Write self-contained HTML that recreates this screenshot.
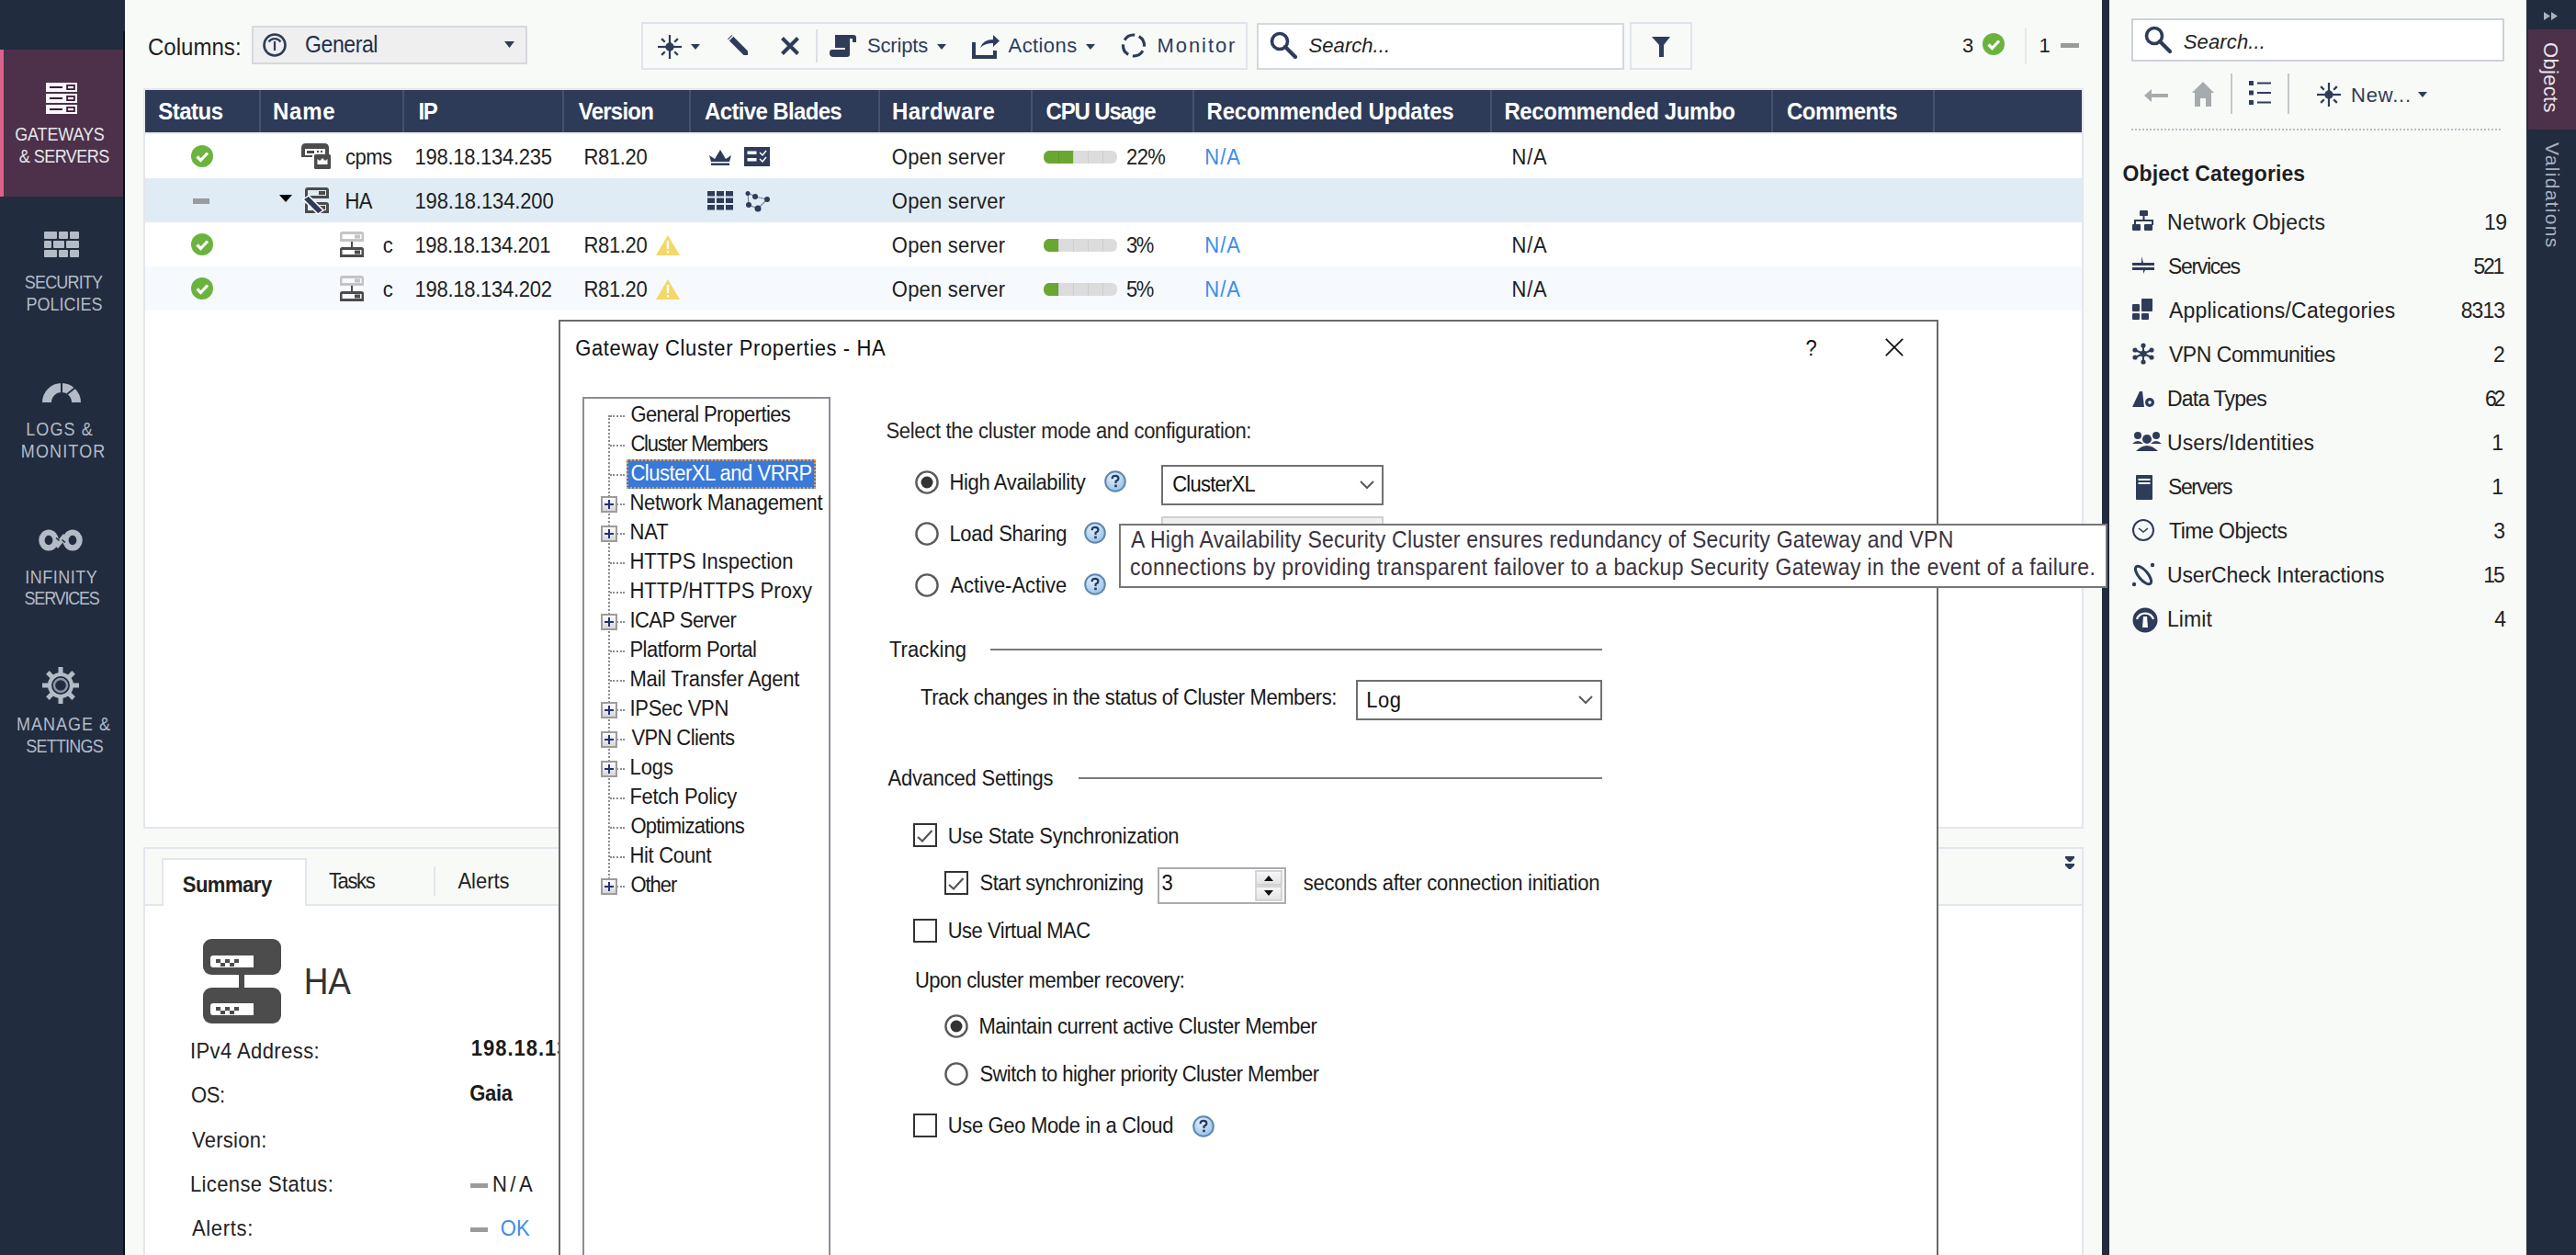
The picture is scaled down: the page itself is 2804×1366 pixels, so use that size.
<!DOCTYPE html><html><head><meta charset="utf-8"><title>Gateway Cluster Properties</title><style>

html,body{margin:0;padding:0}
body{width:2804px;height:1366px;position:relative;overflow:hidden;background:#f8faf8;font-family:"Liberation Sans",sans-serif}
.a{position:absolute}
.t{white-space:pre}
svg{overflow:visible}

</style></head><body>
<div class="a" style="left:0px;top:0px;width:136px;height:1366px;background:#222c3f"></div>
<div class="a" style="left:0px;top:54px;width:134px;height:160px;background:#4d3049"></div>
<div class="a" style="left:0px;top:54px;width:4px;height:160px;background:#d9628a"></div>
<div class="a" style="left:134px;top:34px;width:2px;height:1332px;background:#07101d"></div>
<div class="a t" style="left:16.20px;top:138.20px;font-size:18px;line-height:18px;color:#e6e7ee;letter-spacing:-0.143px;transform:scaleY(1.100);transform-origin:0 15.30px;">GATEWAYS</div>
<div class="a t" style="left:20.85px;top:161.70px;font-size:18px;line-height:18px;color:#e6e7ee;letter-spacing:-0.537px;transform:scaleY(1.100);transform-origin:0 15.30px;">&amp; SERVERS</div>
<div class="a t" style="left:26.75px;top:298.70px;font-size:18px;line-height:18px;color:#b3bbc7;letter-spacing:-0.814px;transform:scaleY(1.100);transform-origin:0 15.30px;">SECURITY</div>
<div class="a t" style="left:28.60px;top:322.70px;font-size:18px;line-height:18px;color:#b3bbc7;letter-spacing:-0.029px;transform:scaleY(1.100);transform-origin:0 15.30px;">POLICIES</div>
<div class="a t" style="left:28.25px;top:459.30px;font-size:18px;line-height:18px;color:#b3bbc7;letter-spacing:1.100px;transform:scaleY(1.100);transform-origin:0 15.30px;">LOGS &amp;</div>
<div class="a t" style="left:22.80px;top:482.70px;font-size:18px;line-height:18px;color:#b3bbc7;letter-spacing:1.133px;transform:scaleY(1.100);transform-origin:0 15.30px;">MONITOR</div>
<div class="a t" style="left:27.35px;top:619.70px;font-size:18px;line-height:18px;color:#b3bbc7;letter-spacing:0.471px;transform:scaleY(1.100);transform-origin:0 15.30px;">INFINITY</div>
<div class="a t" style="left:26.55px;top:643.30px;font-size:18px;line-height:18px;color:#b3bbc7;letter-spacing:-1.214px;transform:scaleY(1.100);transform-origin:0 15.30px;">SERVICES</div>
<div class="a t" style="left:18.00px;top:779.70px;font-size:18px;line-height:18px;color:#b3bbc7;letter-spacing:1.000px;transform:scaleY(1.100);transform-origin:0 15.30px;">MANAGE &amp;</div>
<div class="a t" style="left:28.25px;top:803.70px;font-size:18px;line-height:18px;color:#b3bbc7;letter-spacing:-0.786px;transform:scaleY(1.100);transform-origin:0 15.30px;">SETTINGS</div>
<svg class="a" style="left:50px;top:90px" width="34" height="34" viewBox="0 0 34 34"><rect x="0" y="0" width="34" height="10" fill="#f6f8fd"/><rect x="4" y="4" width="14" height="2" fill="#3c1b35"/><rect x="23.1" y="2.9" width="7.8" height="4.2" fill="none" stroke="#3c1b35" stroke-width="1.8"/><rect x="0" y="12" width="34" height="10" fill="#f6f8fd"/><rect x="4" y="16" width="14" height="2" fill="#3c1b35"/><rect x="23.1" y="14.9" width="7.8" height="4.2" fill="none" stroke="#3c1b35" stroke-width="1.8"/><rect x="0" y="24" width="34" height="10" fill="#f6f8fd"/><rect x="4" y="28" width="14" height="2" fill="#3c1b35"/><rect x="23.1" y="26.9" width="7.8" height="4.2" fill="none" stroke="#3c1b35" stroke-width="1.8"/></svg>
<svg class="a" style="left:48px;top:252px" width="38" height="28" viewBox="0 0 38 28"><rect x="0" y="0" width="14" height="8" rx="1" fill="#b3bbc7"/><rect x="16" y="0" width="10" height="8" rx="1" fill="#b3bbc7"/><rect x="28" y="0" width="10" height="8" rx="1" fill="#b3bbc7"/><rect x="0" y="10" width="8" height="8" rx="1" fill="#b3bbc7"/><rect x="10" y="10" width="12" height="8" rx="1" fill="#b3bbc7"/><rect x="24" y="10" width="14" height="8" rx="1" fill="#b3bbc7"/><rect x="0" y="20" width="14" height="8" rx="1" fill="#b3bbc7"/><rect x="16" y="20" width="10" height="8" rx="1" fill="#b3bbc7"/><rect x="28" y="20" width="10" height="8" rx="1" fill="#b3bbc7"/></svg>
<svg class="a" style="left:46px;top:416px" width="42" height="22" viewBox="0 0 42 22"><path d="M5 22 A16 16 0 0 1 37 22" fill="none" stroke="#b3bbc7" stroke-width="10"/><line x1="21" y1="0" x2="21" y2="11" stroke="#222c3f" stroke-width="2"/><line x1="27" y1="13" x2="39" y2="3.5" stroke="#222c3f" stroke-width="1.8"/></svg>
<svg class="a" style="left:42px;top:576px" width="48" height="24" viewBox="0 0 48 24"><ellipse cx="11" cy="12" rx="7.6" ry="8.4" fill="none" stroke="#b3bbc7" stroke-width="6.4"/><ellipse cx="37" cy="12" rx="7.6" ry="8.4" fill="none" stroke="#b3bbc7" stroke-width="6.4"/><path d="M17 17 L27 5 L31 9 L21 21 Z" fill="#b3bbc7"/><path d="M19 9.5 L22.5 12.5 M25.5 11.5 L29 14.5" stroke="#222c3f" stroke-width="1.6"/></svg>
<svg class="a" style="left:46px;top:726px" width="40" height="40" viewBox="0 0 40 40"><rect x="17.5" y="0" width="5" height="8" fill="#b3bbc7" transform="rotate(0 20 20)"/><rect x="17.5" y="0" width="5" height="8" fill="#b3bbc7" transform="rotate(45 20 20)"/><rect x="17.5" y="0" width="5" height="8" fill="#b3bbc7" transform="rotate(90 20 20)"/><rect x="17.5" y="0" width="5" height="8" fill="#b3bbc7" transform="rotate(135 20 20)"/><rect x="17.5" y="0" width="5" height="8" fill="#b3bbc7" transform="rotate(180 20 20)"/><rect x="17.5" y="0" width="5" height="8" fill="#b3bbc7" transform="rotate(225 20 20)"/><rect x="17.5" y="0" width="5" height="8" fill="#b3bbc7" transform="rotate(270 20 20)"/><rect x="17.5" y="0" width="5" height="8" fill="#b3bbc7" transform="rotate(315 20 20)"/><circle cx="20" cy="20" r="12" fill="none" stroke="#b3bbc7" stroke-width="4"/><circle cx="20" cy="20" r="7" fill="none" stroke="#8d96a5" stroke-width="2.4"/></svg>
<div class="a t" style="left:160.90px;top:39.50px;font-size:24px;line-height:24px;color:#1e1e1e;letter-spacing:0.043px;transform:scaleY(1.080);transform-origin:0 20.40px;">Columns:</div>
<div class="a" style="left:274px;top:28px;width:300px;height:42px;background:#efefef;border:2px solid #d6d9df;box-sizing:border-box"></div>
<svg class="a" style="left:286px;top:36px" width="26" height="26" viewBox="0 0 26 26"><circle cx="13" cy="13" r="11.5" fill="none" stroke="#2e3c5a" stroke-width="2.6"/><path d="M6.5 9.5 A8 8 0 0 1 19.5 9.5" fill="none" stroke="#2e3c5a" stroke-width="2.2"/><line x1="13" y1="9" x2="13" y2="19" stroke="#2e3c5a" stroke-width="2.2"/></svg>
<div class="a t" style="left:332.00px;top:38.25px;font-size:23px;line-height:23px;color:#1f2e4d;letter-spacing:-0.400px;transform:scaleY(1.120);transform-origin:0 19.55px;">General</div>
<svg class="a" style="left:549px;top:45px" width="11" height="7" viewBox="0 0 11 7"><path d="M0 0 H11 L5.5 7 Z" fill="#2e3c5a"/></svg>
<div class="a" style="left:698px;top:24px;width:660px;height:52px;border:2px solid #e1e3ec;box-sizing:border-box"></div>
<svg class="a" style="left:716px;top:38px" width="26" height="26" viewBox="0 0 26 26"><line x1="0" y1="13" x2="26" y2="13" stroke="#2e3c5a" stroke-width="2.2"/><line x1="13" y1="0" x2="13" y2="26" stroke="#2e3c5a" stroke-width="2.2"/><line x1="18.20" y1="18.20" x2="21.84" y2="21.84" stroke="#2e3c5a" stroke-width="2.3100000000000005"/><line x1="18.20" y1="7.80" x2="21.84" y2="4.16" stroke="#2e3c5a" stroke-width="2.3100000000000005"/><line x1="7.80" y1="18.20" x2="4.16" y2="21.84" stroke="#2e3c5a" stroke-width="2.3100000000000005"/><line x1="7.80" y1="7.80" x2="4.16" y2="4.16" stroke="#2e3c5a" stroke-width="2.3100000000000005"/><circle cx="13" cy="13" r="4.68" fill="#2e3c5a"/></svg>
<svg class="a" style="left:752px;top:48px" width="10" height="6" viewBox="0 0 10 6"><path d="M0 0 H10 L5 6 Z" fill="#2e3c5a"/></svg>
<svg class="a" style="left:792px;top:38px" width="22" height="22" viewBox="0 0 22 22"><path d="M4.5 0 L22 17.5 L22 22 L17.5 22 L0 4.5 Z" fill="#2e3c5a"/><path d="M0.5 6.5 L6.5 0.5" stroke="#f8faf8" stroke-width="1.6"/></svg>
<svg class="a" style="left:850px;top:40px" width="20" height="20" viewBox="0 0 20 20"><path d="M1.5 1.5 L18.5 18.5 M18.5 1.5 L1.5 18.5" stroke="#2e3c5a" stroke-width="4"/></svg>
<div class="a" style="left:888px;top:32px;width:2px;height:36px;background:#dde0e6"></div>
<svg class="a" style="left:903px;top:38px" width="29" height="24" viewBox="0 0 29 24"><path d="M6 0 H26 Q29 0 29 3 V8 H25 V4 H22 V14 H6 Z" fill="#2e3c5a"/><path d="M3 16 H22 V21 Q22 24 19 24 H4 Q0 24 0 20 V19 Q0 16 3 16 Z" fill="#2e3c5a"/><rect x="17" y="13" width="5" height="4" fill="#2e3c5a"/></svg>
<div class="a t" style="left:944.00px;top:38.90px;font-size:22px;line-height:22px;color:#2e3c5a;letter-spacing:-0.167px;">Scripts</div>
<svg class="a" style="left:1020px;top:48px" width="10" height="6" viewBox="0 0 10 6"><path d="M0 0 H10 L5 6 Z" fill="#2e3c5a"/></svg>
<svg class="a" style="left:1058px;top:36px" width="30" height="28" viewBox="0 0 30 28"><path d="M2 10 V26 H25 V19" fill="none" stroke="#2e3c5a" stroke-width="4"/><path d="M9 16 Q12 7 23 7 V2 L30 8.5 L23 15 V11 Q14 11 9 16 Z" fill="#2e3c5a"/></svg>
<div class="a t" style="left:1097.60px;top:38.90px;font-size:22px;line-height:22px;color:#2e3c5a;letter-spacing:0.400px;">Actions</div>
<svg class="a" style="left:1182px;top:48px" width="10" height="6" viewBox="0 0 10 6"><path d="M0 0 H10 L5 6 Z" fill="#2e3c5a"/></svg>
<svg class="a" style="left:1220px;top:36px" width="28" height="27" viewBox="0 0 28 27"><circle cx="14" cy="13.5" r="11.5" fill="none" stroke="#2e3c5a" stroke-width="3.2" stroke-dasharray="13 5" transform="rotate(-60 14 13.5)"/></svg>
<div class="a t" style="left:1259.60px;top:38.90px;font-size:22px;line-height:22px;color:#2e3c5a;letter-spacing:1.900px;">Monitor</div>
<div class="a" style="left:1368px;top:25px;width:400px;height:51px;background:#fff;border:2px solid #d5d8de;box-sizing:border-box"></div>
<svg class="a" style="left:1382px;top:34px" width="30" height="31" viewBox="0 0 30 31"><circle cx="11" cy="11" r="8.5" fill="none" stroke="#2e3c5a" stroke-width="3.6"/><line x1="17" y1="17" x2="28" y2="28" stroke="#2e3c5a" stroke-width="4.2" stroke-linecap="round"/></svg>
<div class="a t" style="left:1424.60px;top:38.90px;font-size:22px;line-height:22px;color:#222;font-style:italic;letter-spacing:0.050px;">Search...</div>
<div class="a" style="left:1774px;top:24px;width:68px;height:52px;border:2px solid #e1e3ec;box-sizing:border-box"></div>
<svg class="a" style="left:1798px;top:40px" width="20" height="22" viewBox="0 0 20 22"><path d="M0 0 H20 L13 9 V22 H8 V9 Z" fill="#2e3c5a"/></svg>
<div class="a t" style="left:2136.00px;top:39.30px;font-size:22px;line-height:22px;color:#222;">3</div>
<svg class="a" style="left:2158px;top:36px" width="24" height="24" viewBox="0 0 24 24"><circle cx="12" cy="12" r="12" fill="#6ab43e"/><path d="M6.5 12.5 L10.5 16.5 L18 8.5" fill="none" stroke="#fff" stroke-width="3.2"/></svg>
<div class="a" style="left:2204px;top:30px;width:2px;height:40px;background:#e6e8ea"></div>
<div class="a t" style="left:2219.50px;top:39.30px;font-size:22px;line-height:22px;color:#222;">1</div>
<div class="a" style="left:2243px;top:47px;width:20px;height:5px;background:#9a9a9a"></div>
<div class="a" style="left:2288px;top:0px;width:8px;height:1366px;background:#222c3f"></div>
<div class="a" style="left:156px;top:96px;width:2112px;height:806px;background:#fff;border:2px solid #e3e6ec;box-sizing:border-box"></div>
<div class="a" style="left:158px;top:98px;width:2108px;height:46px;background:#2d3a58"></div>
<div class="a" style="left:282px;top:98px;width:2px;height:46px;background:#46526c"></div>
<div class="a" style="left:438px;top:98px;width:2px;height:46px;background:#46526c"></div>
<div class="a" style="left:612px;top:98px;width:2px;height:46px;background:#46526c"></div>
<div class="a" style="left:750px;top:98px;width:2px;height:46px;background:#46526c"></div>
<div class="a" style="left:956px;top:98px;width:2px;height:46px;background:#46526c"></div>
<div class="a" style="left:1122px;top:98px;width:2px;height:46px;background:#46526c"></div>
<div class="a" style="left:1298px;top:98px;width:2px;height:46px;background:#46526c"></div>
<div class="a" style="left:1622px;top:98px;width:2px;height:46px;background:#46526c"></div>
<div class="a" style="left:1928px;top:98px;width:2px;height:46px;background:#46526c"></div>
<div class="a" style="left:2104px;top:98px;width:2px;height:46px;background:#46526c"></div>
<div class="a t" style="left:172.30px;top:109.60px;font-size:24px;line-height:24px;color:#ffffff;font-weight:700;letter-spacing:-0.520px;transform:scaleY(1.080);transform-origin:0 20.40px;">Status</div>
<div class="a t" style="left:297.00px;top:109.60px;font-size:24px;line-height:24px;color:#ffffff;font-weight:700;letter-spacing:0.767px;transform:scaleY(1.080);transform-origin:0 20.40px;">Name</div>
<div class="a t" style="left:455.50px;top:109.60px;font-size:24px;line-height:24px;color:#ffffff;font-weight:700;letter-spacing:-1.500px;transform:scaleY(1.080);transform-origin:0 20.40px;">IP</div>
<div class="a t" style="left:629.80px;top:109.60px;font-size:24px;line-height:24px;color:#ffffff;font-weight:700;letter-spacing:-0.767px;transform:scaleY(1.080);transform-origin:0 20.40px;">Version</div>
<div class="a t" style="left:767.00px;top:109.60px;font-size:24px;line-height:24px;color:#ffffff;font-weight:700;letter-spacing:-0.642px;transform:scaleY(1.080);transform-origin:0 20.40px;">Active Blades</div>
<div class="a t" style="left:971.00px;top:109.60px;font-size:24px;line-height:24px;color:#ffffff;font-weight:700;letter-spacing:0.343px;transform:scaleY(1.080);transform-origin:0 20.40px;">Hardware</div>
<div class="a t" style="left:1138.50px;top:109.60px;font-size:24px;line-height:24px;color:#ffffff;font-weight:700;letter-spacing:-1.150px;transform:scaleY(1.080);transform-origin:0 20.40px;">CPU Usage</div>
<div class="a t" style="left:1313.60px;top:109.60px;font-size:24px;line-height:24px;color:#ffffff;font-weight:700;letter-spacing:-0.239px;transform:scaleY(1.080);transform-origin:0 20.40px;">Recommended Updates</div>
<div class="a t" style="left:1637.40px;top:109.60px;font-size:24px;line-height:24px;color:#ffffff;font-weight:700;letter-spacing:-0.363px;transform:scaleY(1.080);transform-origin:0 20.40px;">Recommended Jumbo</div>
<div class="a t" style="left:1945.00px;top:109.60px;font-size:24px;line-height:24px;color:#ffffff;font-weight:700;letter-spacing:-0.486px;transform:scaleY(1.080);transform-origin:0 20.40px;">Comments</div>
<div class="a" style="left:158px;top:144px;width:2108px;height:2px;background:#e9edf2"></div>
<div class="a" style="left:158px;top:194px;width:2108px;height:48px;background:#e0ecf5"></div>
<div class="a" style="left:158px;top:290px;width:2108px;height:48px;background:#f6f9fe"></div>
<svg class="a" style="left:208px;top:158px" width="24" height="24" viewBox="0 0 24 24"><circle cx="12" cy="12" r="12" fill="#6ab43e"/><path d="M6.5 12.5 L10.5 16.5 L18 8.5" fill="none" stroke="#fff" stroke-width="3.2"/></svg>
<div class="a" style="left:210px;top:216px;width:18px;height:6px;background:#9b9b9b"></div>
<svg class="a" style="left:208px;top:254px" width="24" height="24" viewBox="0 0 24 24"><circle cx="12" cy="12" r="12" fill="#6ab43e"/><path d="M6.5 12.5 L10.5 16.5 L18 8.5" fill="none" stroke="#fff" stroke-width="3.2"/></svg>
<svg class="a" style="left:208px;top:302px" width="24" height="24" viewBox="0 0 24 24"><circle cx="12" cy="12" r="12" fill="#6ab43e"/><path d="M6.5 12.5 L10.5 16.5 L18 8.5" fill="none" stroke="#fff" stroke-width="3.2"/></svg>
<svg class="a" style="left:328px;top:156px" width="32" height="28" viewBox="0 0 32 28"><path d="M0 15 V5 Q0 0 5 0 H25 Q30 0 30 5 V15 H14 V13 H26 V6 H4 V13 H12 V15 Z" fill="#4b4c4b"/><rect x="6" y="8" width="8" height="3" fill="#4b4c4b"/><rect x="17" y="8" width="2" height="2" fill="#4b4c4b"/><rect x="21" y="8" width="2" height="2" fill="#4b4c4b"/><rect x="14" y="12" width="18" height="16" rx="1.5" fill="#4b4c4b"/><path d="M17.5 23 V17 L20 19 L23 16 L26 19 L28.5 17 V23 Z" fill="#fff"/></svg>
<div class="a t" style="left:376.00px;top:160.80px;font-size:22px;line-height:22px;color:#1e1e1e;letter-spacing:-0.500px;transform:scaleY(1.050);transform-origin:0 18.70px;">cpms</div>
<svg class="a" style="left:304px;top:212px" width="14" height="8" viewBox="0 0 14 8"><path d="M0 0 H14 L7 8 Z" fill="#000"/></svg>
<svg class="a" style="left:332px;top:204px" width="26" height="28" viewBox="0 0 26 28"><path d="M0 12 V3 Q0 0 3 0 H23 Q26 0 26 3 V12 Z" fill="#4b4c4b"/><rect x="3" y="3" width="20" height="6" fill="#e0ecf5"/><rect x="15" y="4" width="7" height="4" fill="#4b4c4b"/><path d="M0 28 V19 Q0 16 3 16 H23 Q26 16 26 19 V28 Z" fill="#4b4c4b"/><rect x="3" y="19" width="20" height="6" fill="#e0ecf5"/><rect x="15" y="20" width="7" height="4" fill="#4b4c4b"/><path d="M-2 13 L4 9 L20 25 L14 29 Z" fill="#2e3c5a" stroke="#fff" stroke-width="1.5"/></svg>
<div class="a t" style="left:375.60px;top:208.90px;font-size:22px;line-height:22px;color:#1e1e1e;letter-spacing:-0.800px;transform:scaleY(1.050);transform-origin:0 18.70px;">HA</div>
<svg class="a" style="left:370px;top:252px" width="26" height="28" viewBox="0 0 26 28"><path d="M0 11 V2.5 Q0 0 2.5 0 H23.5 Q26 0 26 2.5 V11 Z" fill="#c4c4c4"/><rect x="2.5" y="3" width="21" height="5" fill="#ffffff"/><rect x="16" y="3.5" width="6" height="4" fill="#c4c4c4"/><rect x="12" y="11" width="2" height="6" fill="#4b4c4b"/><path d="M0 28 V19.5 Q0 17 2.5 17 H23.5 Q26 17 26 19.5 V28 Z" fill="#4b4c4b"/><rect x="2.5" y="20" width="21" height="5" fill="#ffffff"/><rect x="16" y="20.5" width="6" height="4" fill="#4b4c4b"/></svg>
<svg class="a" style="left:370px;top:300px" width="26" height="28" viewBox="0 0 26 28"><path d="M0 11 V2.5 Q0 0 2.5 0 H23.5 Q26 0 26 2.5 V11 Z" fill="#c4c4c4"/><rect x="2.5" y="3" width="21" height="5" fill="#f6f9fe"/><rect x="16" y="3.5" width="6" height="4" fill="#c4c4c4"/><rect x="12" y="11" width="2" height="6" fill="#4b4c4b"/><path d="M0 28 V19.5 Q0 17 2.5 17 H23.5 Q26 17 26 19.5 V28 Z" fill="#4b4c4b"/><rect x="2.5" y="20" width="21" height="5" fill="#f6f9fe"/><rect x="16" y="20.5" width="6" height="4" fill="#4b4c4b"/></svg>
<div class="a t" style="left:416.70px;top:257.30px;font-size:22px;line-height:22px;color:#1e1e1e;transform:scaleY(1.050);transform-origin:0 18.70px;">c</div>
<div class="a t" style="left:416.70px;top:305.30px;font-size:22px;line-height:22px;color:#1e1e1e;transform:scaleY(1.050);transform-origin:0 18.70px;">c</div>
<div class="a t" style="left:451.50px;top:161.10px;font-size:22px;line-height:22px;color:#1e1e1e;letter-spacing:-0.262px;transform:scaleY(1.050);transform-origin:0 18.70px;">198.18.134.235</div>
<div class="a t" style="left:451.50px;top:209.10px;font-size:22px;line-height:22px;color:#1e1e1e;letter-spacing:-0.138px;transform:scaleY(1.050);transform-origin:0 18.70px;">198.18.134.200</div>
<div class="a t" style="left:451.50px;top:257.10px;font-size:22px;line-height:22px;color:#1e1e1e;letter-spacing:-0.385px;transform:scaleY(1.050);transform-origin:0 18.70px;">198.18.134.201</div>
<div class="a t" style="left:451.50px;top:305.10px;font-size:22px;line-height:22px;color:#1e1e1e;letter-spacing:-0.262px;transform:scaleY(1.050);transform-origin:0 18.70px;">198.18.134.202</div>
<div class="a t" style="left:635.60px;top:161.10px;font-size:22px;line-height:22px;color:#1e1e1e;letter-spacing:-0.380px;transform:scaleY(1.050);transform-origin:0 18.70px;">R81.20</div>
<div class="a t" style="left:635.60px;top:257.10px;font-size:22px;line-height:22px;color:#1e1e1e;letter-spacing:-0.380px;transform:scaleY(1.050);transform-origin:0 18.70px;">R81.20</div>
<div class="a t" style="left:635.60px;top:305.10px;font-size:22px;line-height:22px;color:#1e1e1e;letter-spacing:-0.380px;transform:scaleY(1.050);transform-origin:0 18.70px;">R81.20</div>
<svg class="a" style="left:714px;top:256px" width="26" height="22" viewBox="0 0 26 22"><path d="M13 0 L26 22 H0 Z" fill="#f4d867"/><rect x="11.8" y="6" width="2.4" height="9" fill="#fff"/><rect x="11.8" y="17" width="2.4" height="2.5" fill="#fff"/></svg>
<svg class="a" style="left:714px;top:304px" width="26" height="22" viewBox="0 0 26 22"><path d="M13 0 L26 22 H0 Z" fill="#f4d867"/><rect x="11.8" y="6" width="2.4" height="9" fill="#fff"/><rect x="11.8" y="17" width="2.4" height="2.5" fill="#fff"/></svg>
<svg class="a" style="left:770px;top:162px" width="28" height="18" viewBox="0 0 28 18"><path d="M2 7 L8 11 L14 1 L20 11 L26 7 L24 14 H4 Z" fill="#2e3c5a"/><rect x="4" y="15.5" width="20" height="2.5" fill="#2e3c5a"/></svg>
<svg class="a" style="left:810px;top:160px" width="28" height="21" viewBox="0 0 28 21"><rect x="0" y="0" width="28" height="21" fill="#2e3c5a"/><rect x="3.5" y="4.5" width="10" height="3.5" fill="#fff"/><rect x="3.5" y="12" width="10" height="3.5" fill="#fff"/><path d="M17 6 L20 9 L24 4 M17 13 L20 16 L24 11" stroke="#fff" stroke-width="1.5" fill="none"/></svg>
<svg class="a" style="left:770px;top:208px" width="28" height="21" viewBox="0 0 28 21"><rect x="0" y="0" width="8" height="5.5" fill="#2e3c5a"/><rect x="10" y="0" width="8" height="5.5" fill="#2e3c5a"/><rect x="20" y="0" width="8" height="5.5" fill="#2e3c5a"/><rect x="0" y="7.5" width="8" height="5.5" fill="#2e3c5a"/><rect x="10" y="7.5" width="8" height="5.5" fill="#2e3c5a"/><rect x="20" y="7.5" width="8" height="5.5" fill="#2e3c5a"/><rect x="0" y="15" width="8" height="5.5" fill="#2e3c5a"/><rect x="10" y="15" width="8" height="5.5" fill="#2e3c5a"/><rect x="20" y="15" width="8" height="5.5" fill="#2e3c5a"/></svg>
<svg class="a" style="left:810px;top:208px" width="28" height="22" viewBox="0 0 28 22"><path d="M4 2 L5 15 L15 19 L25 9 L12 6 Z" fill="none" stroke="#7d8799" stroke-width="1.2"/><circle cx="4" cy="2.5" r="2.5" fill="#2e3c5a"/><circle cx="12" cy="6" r="3" fill="#2e3c5a"/><circle cx="25" cy="9" r="3" fill="#2e3c5a"/><circle cx="5" cy="15" r="3" fill="#2e3c5a"/><circle cx="15" cy="19" r="3.5" fill="#2e3c5a"/></svg>
<div class="a t" style="left:970.80px;top:161.10px;font-size:22px;line-height:22px;color:#1e1e1e;letter-spacing:0.220px;transform:scaleY(1.050);transform-origin:0 18.70px;">Open server</div>
<div class="a t" style="left:970.80px;top:209.10px;font-size:22px;line-height:22px;color:#1e1e1e;letter-spacing:0.220px;transform:scaleY(1.050);transform-origin:0 18.70px;">Open server</div>
<div class="a t" style="left:970.80px;top:257.10px;font-size:22px;line-height:22px;color:#1e1e1e;letter-spacing:0.220px;transform:scaleY(1.050);transform-origin:0 18.70px;">Open server</div>
<div class="a t" style="left:970.80px;top:305.10px;font-size:22px;line-height:22px;color:#1e1e1e;letter-spacing:0.220px;transform:scaleY(1.050);transform-origin:0 18.70px;">Open server</div>
<svg class="a" style="left:1136px;top:164px" width="80" height="14" viewBox="0 0 80 14"><rect x="0" y="0" width="80" height="14" rx="6" fill="#dcdcdc"/><rect x="16" y="0" width="1" height="14" fill="#cdcdcd"/><rect x="32" y="0" width="1" height="14" fill="#cdcdcd"/><rect x="48" y="0" width="1" height="14" fill="#cdcdcd"/><rect x="64" y="0" width="1" height="14" fill="#cdcdcd"/><path d="M6 0 H32 V14 H6 A6 7 0 0 1 6 0 Z" fill="#6aa632"/><rect x="16" y="0" width="1" height="14" fill="#5f9a2c"/></svg>
<svg class="a" style="left:1136px;top:260px" width="80" height="14" viewBox="0 0 80 14"><rect x="0" y="0" width="80" height="14" rx="6" fill="#dcdcdc"/><rect x="16" y="0" width="1" height="14" fill="#cdcdcd"/><rect x="32" y="0" width="1" height="14" fill="#cdcdcd"/><rect x="48" y="0" width="1" height="14" fill="#cdcdcd"/><rect x="64" y="0" width="1" height="14" fill="#cdcdcd"/><path d="M6 0 H16 V14 H6 A6 7 0 0 1 6 0 Z" fill="#6aa632"/></svg>
<svg class="a" style="left:1136px;top:308px" width="80" height="14" viewBox="0 0 80 14"><rect x="0" y="0" width="80" height="14" rx="6" fill="#dcdcdc"/><rect x="16" y="0" width="1" height="14" fill="#cdcdcd"/><rect x="32" y="0" width="1" height="14" fill="#cdcdcd"/><rect x="48" y="0" width="1" height="14" fill="#cdcdcd"/><rect x="64" y="0" width="1" height="14" fill="#cdcdcd"/><path d="M6 0 H16 V14 H6 A6 7 0 0 1 6 0 Z" fill="#6aa632"/></svg>
<div class="a t" style="left:1226.00px;top:161.10px;font-size:22px;line-height:22px;color:#1e1e1e;letter-spacing:-0.600px;transform:scaleY(1.050);transform-origin:0 18.70px;">22%</div>
<div class="a t" style="left:1226.00px;top:257.10px;font-size:22px;line-height:22px;color:#1e1e1e;letter-spacing:-1.500px;transform:scaleY(1.050);transform-origin:0 18.70px;">3%</div>
<div class="a t" style="left:1226.00px;top:305.10px;font-size:22px;line-height:22px;color:#1e1e1e;letter-spacing:-1.500px;transform:scaleY(1.050);transform-origin:0 18.70px;">5%</div>
<div class="a t" style="left:1311.30px;top:161.10px;font-size:22px;line-height:22px;color:#3b8de8;letter-spacing:0.950px;transform:scaleY(1.050);transform-origin:0 18.70px;">N/A</div>
<div class="a t" style="left:1645.50px;top:161.10px;font-size:22px;line-height:22px;color:#1e1e1e;letter-spacing:0.750px;transform:scaleY(1.050);transform-origin:0 18.70px;">N/A</div>
<div class="a t" style="left:1311.30px;top:257.10px;font-size:22px;line-height:22px;color:#3b8de8;letter-spacing:0.950px;transform:scaleY(1.050);transform-origin:0 18.70px;">N/A</div>
<div class="a t" style="left:1645.50px;top:257.10px;font-size:22px;line-height:22px;color:#1e1e1e;letter-spacing:0.750px;transform:scaleY(1.050);transform-origin:0 18.70px;">N/A</div>
<div class="a t" style="left:1311.30px;top:305.10px;font-size:22px;line-height:22px;color:#3b8de8;letter-spacing:0.950px;transform:scaleY(1.050);transform-origin:0 18.70px;">N/A</div>
<div class="a t" style="left:1645.50px;top:305.10px;font-size:22px;line-height:22px;color:#1e1e1e;letter-spacing:0.750px;transform:scaleY(1.050);transform-origin:0 18.70px;">N/A</div>
<div class="a" style="left:156px;top:922px;width:2112px;height:460px;background:#fff;border:2px solid #e3e6ec;box-sizing:border-box"></div>
<div class="a" style="left:158px;top:924px;width:2108px;height:61px;background:#f8faf8"></div>
<div class="a" style="left:158px;top:984px;width:2108px;height:2px;background:#e3e6ec"></div>
<div class="a" style="left:176px;top:934px;width:158px;height:52px;background:#fff;border:2px solid #e3e6ec;border-bottom:none;box-sizing:border-box"></div>
<div class="a t" style="left:198.70px;top:952.80px;font-size:22px;line-height:22px;color:#222;font-weight:700;letter-spacing:-0.467px;transform:scaleY(1.080);transform-origin:0 18.70px;">Summary</div>
<div class="a t" style="left:358.00px;top:949.10px;font-size:22px;line-height:22px;color:#222;letter-spacing:-1.400px;transform:scaleY(1.080);transform-origin:0 18.70px;">Tasks</div>
<div class="a" style="left:472px;top:943px;width:2px;height:32px;background:#e3e6ea"></div>
<div class="a t" style="left:498.40px;top:949.10px;font-size:22px;line-height:22px;color:#222;letter-spacing:-0.020px;transform:scaleY(1.080);transform-origin:0 18.70px;">Alerts</div>
<svg class="a" style="left:2248px;top:932px" width="10" height="14" viewBox="0 0 10 14"><path d="M0 0 H10 V2 L6 6 H4 L0 2 Z M0 8 H10 V10 L6 14 H4 L0 10 Z" fill="#2e3c5a"/></svg>
<svg class="a" style="left:221px;top:1022px" width="85" height="92" viewBox="0 0 85 92"><rect x="0" y="0" width="85" height="39" rx="9" fill="#4b4c4b"/><rect x="8" y="18" width="69" height="13" rx="3" fill="#fff"/><rect x="55" y="18" width="22" height="13" fill="#4b4c4b"/><rect x="14" y="22" width="5" height="4" fill="#4b4c4b"/><rect x="24" y="22" width="5" height="4" fill="#4b4c4b"/><rect x="34" y="22" width="5" height="4" fill="#4b4c4b"/><rect x="19" y="26" width="5" height="4" fill="#4b4c4b"/><rect x="29" y="26" width="5" height="4" fill="#4b4c4b"/><rect x="39" y="39" width="6" height="15" fill="#4b4c4b"/><rect x="0" y="53" width="85" height="39" rx="9" fill="#4b4c4b"/><rect x="8" y="70" width="69" height="13" rx="3" fill="#fff"/><rect x="55" y="70" width="22" height="13" fill="#4b4c4b"/><rect x="14" y="74" width="5" height="4" fill="#4b4c4b"/><rect x="24" y="74" width="5" height="4" fill="#4b4c4b"/><rect x="34" y="74" width="5" height="4" fill="#4b4c4b"/><rect x="19" y="78" width="5" height="4" fill="#4b4c4b"/><rect x="29" y="78" width="5" height="4" fill="#4b4c4b"/></svg>
<div class="a t" style="left:330.70px;top:1050.75px;font-size:37px;line-height:37px;color:#333;letter-spacing:-0.100px;transform:scaleY(1.080);transform-origin:0 31.45px;">HA</div>
<div class="a t" style="left:206.90px;top:1134.30px;font-size:22px;line-height:22px;color:#222;letter-spacing:0.425px;transform:scaleY(1.080);transform-origin:0 18.70px;">IPv4 Address:</div>
<div class="a t" style="left:207.90px;top:1182.30px;font-size:22px;line-height:22px;color:#222;letter-spacing:-0.300px;transform:scaleY(1.080);transform-origin:0 18.70px;">OS:</div>
<div class="a t" style="left:208.90px;top:1230.60px;font-size:22px;line-height:22px;color:#222;letter-spacing:0.286px;transform:scaleY(1.080);transform-origin:0 18.70px;">Version:</div>
<div class="a t" style="left:206.90px;top:1278.80px;font-size:22px;line-height:22px;color:#222;letter-spacing:0.393px;transform:scaleY(1.080);transform-origin:0 18.70px;">License Status:</div>
<div class="a t" style="left:208.90px;top:1326.90px;font-size:22px;line-height:22px;color:#222;letter-spacing:0.667px;transform:scaleY(1.080);transform-origin:0 18.70px;">Alerts:</div>
<div class="a t" style="left:512.70px;top:1131.30px;font-size:22px;line-height:22px;color:#1a1a1a;font-weight:700;letter-spacing:1.000px;transform:scaleY(1.080);transform-origin:0 18.70px;">198.18.134.200</div>
<div class="a t" style="left:511.20px;top:1179.60px;font-size:22px;line-height:22px;color:#1a1a1a;font-weight:700;letter-spacing:-0.300px;transform:scaleY(1.080);transform-origin:0 18.70px;">Gaia</div>
<div class="a" style="left:512px;top:1288px;width:19px;height:5px;background:#9b9b9b"></div>
<div class="a t" style="left:535.90px;top:1278.80px;font-size:22px;line-height:22px;color:#222;letter-spacing:3.500px;transform:scaleY(1.080);transform-origin:0 18.70px;">N/A</div>
<div class="a" style="left:512px;top:1336px;width:19px;height:5px;background:#9b9b9b"></div>
<div class="a t" style="left:544.70px;top:1326.90px;font-size:22px;line-height:22px;color:#3b8de8;letter-spacing:0.100px;transform:scaleY(1.080);transform-origin:0 18.70px;">OK</div>
<div class="a" style="left:2320px;top:20px;width:406px;height:47px;background:#fff;border:2px solid #cdd1d8;box-sizing:border-box"></div>
<svg class="a" style="left:2334px;top:28px" width="30" height="31" viewBox="0 0 30 31"><circle cx="11" cy="11" r="8.5" fill="none" stroke="#2e3c5a" stroke-width="3.6"/><line x1="17" y1="17" x2="28" y2="28" stroke="#2e3c5a" stroke-width="4.2" stroke-linecap="round"/></svg>
<div class="a t" style="left:2376.80px;top:35.30px;font-size:22px;line-height:22px;color:#222;font-style:italic;letter-spacing:0.125px;transform:scaleY(1.040);transform-origin:0 18.70px;">Search...</div>
<svg class="a" style="left:2334px;top:96px" width="26" height="16" viewBox="0 0 26 16"><path d="M0 8 L8 1 V6 H26 V10 H8 V15 Z" fill="#a6abad"/></svg>
<svg class="a" style="left:2386px;top:89px" width="24" height="27" viewBox="0 0 24 27"><path d="M12 0 L24 12 H21 V27 H15 V18 H9 V27 H3 V12 H0 Z" fill="#a6abad"/></svg>
<div class="a" style="left:2428px;top:80px;width:2px;height:44px;background:#c3c7ca"></div>
<svg class="a" style="left:2448px;top:88px" width="24" height="26" viewBox="0 0 24 26"><rect x="0" y="0" width="5" height="5" fill="#2e3c5a"/><rect x="9" y="1.5" width="15" height="2" fill="#2e3c5a"/><rect x="0" y="10.5" width="5" height="5" fill="#2e3c5a"/><rect x="9" y="12.0" width="15" height="2" fill="#2e3c5a"/><rect x="0" y="21" width="5" height="5" fill="#2e3c5a"/><rect x="9" y="22.5" width="15" height="2" fill="#2e3c5a"/></svg>
<div class="a" style="left:2490px;top:80px;width:2px;height:44px;background:#c3c7ca"></div>
<svg class="a" style="left:2522px;top:89.5px" width="26" height="26" viewBox="0 0 26 26"><line x1="0" y1="13" x2="26" y2="13" stroke="#2e3c5a" stroke-width="2.2"/><line x1="13" y1="0" x2="13" y2="26" stroke="#2e3c5a" stroke-width="2.2"/><line x1="18.20" y1="18.20" x2="21.84" y2="21.84" stroke="#2e3c5a" stroke-width="2.3100000000000005"/><line x1="18.20" y1="7.80" x2="21.84" y2="4.16" stroke="#2e3c5a" stroke-width="2.3100000000000005"/><line x1="7.80" y1="18.20" x2="4.16" y2="21.84" stroke="#2e3c5a" stroke-width="2.3100000000000005"/><line x1="7.80" y1="7.80" x2="4.16" y2="4.16" stroke="#2e3c5a" stroke-width="2.3100000000000005"/><circle cx="13" cy="13" r="4.68" fill="#2e3c5a"/></svg>
<div class="a t" style="left:2559.00px;top:93.30px;font-size:22px;line-height:22px;color:#2e3c5a;letter-spacing:0.800px;transform:scaleY(1.040);transform-origin:0 18.70px;">New...</div>
<svg class="a" style="left:2632px;top:100px" width="10" height="6" viewBox="0 0 10 6"><path d="M0 0 H10 L5 6 Z" fill="#2e3c5a"/></svg>
<div class="a" style="left:2320px;top:140px;width:402px;height:0;border-top:2px dotted #b9bdc5"></div>
<div class="a t" style="left:2310.50px;top:178.25px;font-size:23px;line-height:23px;color:#1e1e1e;font-weight:700;letter-spacing:0.113px;transform:scaleY(1.040);transform-origin:0 19.55px;">Object Categories</div>
<div class="a t" style="left:2359.00px;top:230.85px;font-size:23px;line-height:23px;color:#222;letter-spacing:0.236px;transform:scaleY(1.040);transform-origin:0 19.55px;">Network Objects</div>
<div class="a t" style="left:2703.90px;top:230.85px;font-size:23px;line-height:23px;color:#222;letter-spacing:-0.500px;transform:scaleY(1.040);transform-origin:0 19.55px;">19</div>
<div class="a t" style="left:2360.00px;top:278.85px;font-size:23px;line-height:23px;color:#222;letter-spacing:-1.329px;transform:scaleY(1.040);transform-origin:0 19.55px;">Services</div>
<div class="a t" style="left:2692.50px;top:278.85px;font-size:23px;line-height:23px;color:#222;letter-spacing:-2.250px;transform:scaleY(1.040);transform-origin:0 19.55px;">521</div>
<div class="a t" style="left:2361.00px;top:326.85px;font-size:23px;line-height:23px;color:#222;letter-spacing:0.205px;transform:scaleY(1.040);transform-origin:0 19.55px;">Applications/Categories</div>
<div class="a t" style="left:2678.70px;top:326.85px;font-size:23px;line-height:23px;color:#222;letter-spacing:-0.900px;transform:scaleY(1.040);transform-origin:0 19.55px;">8313</div>
<div class="a t" style="left:2361.00px;top:374.85px;font-size:23px;line-height:23px;color:#222;letter-spacing:-0.471px;transform:scaleY(1.040);transform-origin:0 19.55px;">VPN Communities</div>
<div class="a t" style="left:2714.00px;top:374.85px;font-size:23px;line-height:23px;color:#222;transform:scaleY(1.040);transform-origin:0 19.55px;">2</div>
<div class="a t" style="left:2359.00px;top:422.85px;font-size:23px;line-height:23px;color:#222;letter-spacing:-0.800px;transform:scaleY(1.040);transform-origin:0 19.55px;">Data Types</div>
<div class="a t" style="left:2704.90px;top:422.85px;font-size:23px;line-height:23px;color:#222;letter-spacing:-3.300px;transform:scaleY(1.040);transform-origin:0 19.55px;">62</div>
<div class="a t" style="left:2359.00px;top:470.85px;font-size:23px;line-height:23px;color:#222;letter-spacing:0.107px;transform:scaleY(1.040);transform-origin:0 19.55px;">Users/Identities</div>
<div class="a t" style="left:2712.30px;top:470.85px;font-size:23px;line-height:23px;color:#222;transform:scaleY(1.040);transform-origin:0 19.55px;">1</div>
<div class="a t" style="left:2360.00px;top:518.85px;font-size:23px;line-height:23px;color:#222;letter-spacing:-1.450px;transform:scaleY(1.040);transform-origin:0 19.55px;">Servers</div>
<div class="a t" style="left:2712.30px;top:518.85px;font-size:23px;line-height:23px;color:#222;transform:scaleY(1.040);transform-origin:0 19.55px;">1</div>
<div class="a t" style="left:2361.00px;top:566.85px;font-size:23px;line-height:23px;color:#222;letter-spacing:-0.518px;transform:scaleY(1.040);transform-origin:0 19.55px;">Time Objects</div>
<div class="a t" style="left:2714.30px;top:566.85px;font-size:23px;line-height:23px;color:#222;transform:scaleY(1.040);transform-origin:0 19.55px;">3</div>
<div class="a t" style="left:2359.00px;top:614.85px;font-size:23px;line-height:23px;color:#222;letter-spacing:-0.119px;transform:scaleY(1.040);transform-origin:0 19.55px;">UserCheck Interactions</div>
<div class="a t" style="left:2703.30px;top:614.85px;font-size:23px;line-height:23px;color:#222;letter-spacing:-2.000px;transform:scaleY(1.040);transform-origin:0 19.55px;">15</div>
<div class="a t" style="left:2359.00px;top:662.85px;font-size:23px;line-height:23px;color:#222;letter-spacing:0.075px;transform:scaleY(1.040);transform-origin:0 19.55px;">Limit</div>
<div class="a t" style="left:2715.30px;top:662.85px;font-size:23px;line-height:23px;color:#222;transform:scaleY(1.040);transform-origin:0 19.55px;">4</div>
<svg class="a" style="left:2321px;top:229px" width="26" height="26" viewBox="0 0 26 26"><rect x="8" y="0" width="9" height="6" rx="1" fill="#2e3c5a"/><rect x="11.5" y="6" width="2" height="5" fill="#2e3c5a"/><rect x="2" y="10" width="21" height="2" fill="#2e3c5a"/><rect x="2" y="10" width="2" height="6" fill="#2e3c5a"/><rect x="21" y="10" width="2" height="6" fill="#2e3c5a"/><rect x="0" y="15" width="9" height="7" rx="1" fill="#2e3c5a"/><rect x="13" y="15" width="9" height="7" rx="1" fill="#2e3c5a"/></svg>
<svg class="a" style="left:2321px;top:277px" width="26" height="26" viewBox="0 0 26 26"><path d="M10 2 V9 H0 V12 H24 V9 H12 Z" fill="#2e3c5a"/><path d="M12 21 V14 H24 V17 H14 Z" fill="#2e3c5a"/><rect x="0" y="14" width="24" height="3" fill="#2e3c5a"/></svg>
<svg class="a" style="left:2321px;top:325px" width="26" height="26" viewBox="0 0 26 26"><rect x="0" y="6" width="8" height="8" rx="1" fill="#2e3c5a"/><rect x="10" y="0" width="12" height="14" rx="1" fill="#2e3c5a"/><rect x="0" y="16" width="8" height="7" rx="1" fill="#2e3c5a"/><rect x="10" y="16" width="8" height="7" rx="1" fill="#2e3c5a"/></svg>
<svg class="a" style="left:2321px;top:373px" width="26" height="26" viewBox="0 0 26 26"><line x1="12" y1="12" x2="12" y2="3" stroke="#2e3c5a" stroke-width="2"/><circle cx="12" cy="3" r="2.6" fill="#2e3c5a"/><line x1="12" y1="12" x2="12" y2="21" stroke="#2e3c5a" stroke-width="2"/><circle cx="12" cy="21" r="2.6" fill="#2e3c5a"/><line x1="12" y1="12" x2="3" y2="8" stroke="#2e3c5a" stroke-width="2"/><circle cx="3" cy="8" r="2.6" fill="#2e3c5a"/><line x1="12" y1="12" x2="21" y2="8" stroke="#2e3c5a" stroke-width="2"/><circle cx="21" cy="8" r="2.6" fill="#2e3c5a"/><line x1="12" y1="12" x2="3" y2="16" stroke="#2e3c5a" stroke-width="2"/><circle cx="3" cy="16" r="2.6" fill="#2e3c5a"/><line x1="12" y1="12" x2="21" y2="16" stroke="#2e3c5a" stroke-width="2"/><circle cx="21" cy="16" r="2.6" fill="#2e3c5a"/><circle cx="12" cy="12" r="3.5" fill="#2e3c5a"/></svg>
<svg class="a" style="left:2321px;top:421px" width="26" height="26" viewBox="0 0 26 26"><path d="M0 22 L8 5 L11 5 L13 22 Z" fill="#2e3c5a"/><circle cx="19" cy="17" r="5" fill="#2e3c5a"/><circle cx="19" cy="17" r="1.8" fill="#f8faf8"/></svg>
<svg class="a" style="left:2321px;top:469px" width="32" height="26" viewBox="0 0 32 26"><circle cx="6" cy="5" r="4" fill="#2e3c5a"/><circle cx="26" cy="5" r="4" fill="#2e3c5a"/><path d="M0 14 Q6 8 12 14 Z M20 14 Q26 8 32 14 Z" fill="#2e3c5a"/><circle cx="16" cy="9" r="5" fill="#2e3c5a"/><path d="M4 22 Q16 10 28 22 Z" fill="#2e3c5a"/></svg>
<svg class="a" style="left:2321px;top:517px" width="26" height="27" viewBox="0 0 26 27"><rect x="4" y="0" width="18" height="27" rx="1" fill="#2e3c5a"/><rect x="6.5" y="4" width="13" height="2" fill="#f8faf8"/><rect x="6.5" y="8" width="13" height="2" fill="#f8faf8"/></svg>
<svg class="a" style="left:2321px;top:565px" width="26" height="26" viewBox="0 0 26 26"><circle cx="12" cy="12" r="11" fill="none" stroke="#2e3c5a" stroke-width="2"/><path d="M7 10 L12 14 L17 10" fill="none" stroke="#2e3c5a" stroke-width="1.6"/></svg>
<svg class="a" style="left:2321px;top:613px" width="26" height="26" viewBox="0 0 26 26"><ellipse cx="12" cy="13" rx="5" ry="12" transform="rotate(-40 12 13)" fill="none" stroke="#2e3c5a" stroke-width="3"/><circle cx="22" cy="2" r="2.2" fill="#2e3c5a"/><circle cx="2" cy="23" r="2.2" fill="#2e3c5a"/></svg>
<svg class="a" style="left:2321px;top:661px" width="28" height="28" viewBox="0 0 28 28"><circle cx="14" cy="14" r="13.5" fill="#2e3c5a"/><path d="M5 13 A9.5 9.5 0 0 1 23 13" fill="none" stroke="#f8faf8" stroke-width="2.2"/><path d="M12 10 H16 L17 22 H11 Z" fill="#f8faf8"/></svg>
<div class="a" style="left:2750px;top:0px;width:54px;height:1366px;background:#222c3f"></div>
<div class="a" style="left:2752px;top:32px;width:52px;height:109px;background:#4d3049"></div>
<svg class="a" style="left:2769px;top:13px" width="15" height="9" viewBox="0 0 15 9"><path d="M0 0 L7 4.5 L0 9 Z M8 0 L15 4.5 L8 9 Z" fill="#aab2bd"/></svg>
<div class="a t" style="left:2763px;top:46px;width:26px;height:80px;writing-mode:vertical-rl;font-size:22px;line-height:26px;color:#e4e4ea;letter-spacing:0.3px">Objects</div>
<div class="a t" style="left:2766px;top:155px;width:24px;height:118px;writing-mode:vertical-rl;font-size:21px;line-height:24px;color:#aab2bd;letter-spacing:1.3px">Validations</div>
<div class="a" style="left:608px;top:348px;width:1502px;height:1030px;background:#fff;border:2px solid #6a6a6a;box-sizing:border-box"></div>
<div class="a t" style="left:626.30px;top:369.10px;font-size:22px;line-height:22px;color:#111;letter-spacing:0.610px;transform:scaleY(1.090);transform-origin:0 18.70px;">Gateway Cluster Properties - HA</div>
<div class="a t" style="left:1965.50px;top:369.10px;font-size:22px;line-height:22px;color:#111;transform:scaleY(1.090);transform-origin:0 18.70px;">?</div>
<svg class="a" style="left:2052px;top:368px" width="20" height="20" viewBox="0 0 20 20"><path d="M0.8 0.8 L19.2 19.2 M19.2 0.8 L0.8 19.2" stroke="#111" stroke-width="1.7"/></svg>
<div class="a" style="left:634px;top:432px;width:270px;height:960px;border:2px solid #8a8e96;box-sizing:border-box"></div>
<div class="a" style="left:662px;top:452px;width:0;height:512px;border-left:2px dotted #8c8c8c"></div>
<div class="a" style="left:664px;top:451.8px;width:16px;height:0;border-top:2px dotted #8c8c8c"></div>
<div class="a t" style="left:686.40px;top:441.00px;font-size:22px;line-height:22px;color:#1a1a1a;letter-spacing:-0.600px;transform:scaleY(1.090);transform-origin:0 18.70px;">General Properties</div>
<div class="a" style="left:664px;top:483.8px;width:16px;height:0;border-top:2px dotted #8c8c8c"></div>
<div class="a t" style="left:686.40px;top:473.00px;font-size:22px;line-height:22px;color:#1a1a1a;letter-spacing:-1.250px;transform:scaleY(1.090);transform-origin:0 18.70px;">Cluster Members</div>
<div class="a" style="left:664px;top:515.8px;width:16px;height:0;border-top:2px dotted #8c8c8c"></div>
<div class="a" style="left:682px;top:500px;width:206px;height:32px;background:#3879d9;outline:2px dotted #f29a3a;outline-offset:-2px"></div>
<div class="a t" style="left:686.40px;top:505.00px;font-size:22px;line-height:22px;color:#ffffff;letter-spacing:-0.471px;transform:scaleY(1.090);transform-origin:0 18.70px;">ClusterXL and VRRP</div>
<div class="a" style="left:664px;top:547.8px;width:16px;height:0;border-top:2px dotted #8c8c8c"></div>
<svg class="a" style="left:654px;top:540px" width="18" height="18" viewBox="0 0 18 18"><defs><linearGradient id="pg" x1="0" y1="0" x2="0" y2="1"><stop offset="0" stop-color="#ffffff"/><stop offset="1" stop-color="#d4d4d4"/></linearGradient></defs><rect x="1" y="1" width="16" height="16" fill="url(#pg)" stroke="#9c9c9c" stroke-width="2"/><path d="M4 9 H14 M9 4 V14" stroke="#22327a" stroke-width="2"/></svg>
<div class="a t" style="left:685.40px;top:537.00px;font-size:22px;line-height:22px;color:#1a1a1a;letter-spacing:-0.294px;transform:scaleY(1.090);transform-origin:0 18.70px;">Network Management</div>
<div class="a" style="left:664px;top:579.8px;width:16px;height:0;border-top:2px dotted #8c8c8c"></div>
<svg class="a" style="left:654px;top:572px" width="18" height="18" viewBox="0 0 18 18"><rect x="1" y="1" width="16" height="16" fill="url(#pg)" stroke="#9c9c9c" stroke-width="2"/><path d="M4 9 H14 M9 4 V14" stroke="#22327a" stroke-width="2"/></svg>
<div class="a t" style="left:685.40px;top:569.00px;font-size:22px;line-height:22px;color:#1a1a1a;transform:scaleY(1.090);transform-origin:0 18.70px;">NAT</div>
<div class="a" style="left:664px;top:611.8px;width:16px;height:0;border-top:2px dotted #8c8c8c"></div>
<div class="a t" style="left:685.40px;top:601.00px;font-size:22px;line-height:22px;color:#1a1a1a;letter-spacing:-0.027px;transform:scaleY(1.090);transform-origin:0 18.70px;">HTTPS Inspection</div>
<div class="a" style="left:664px;top:643.8px;width:16px;height:0;border-top:2px dotted #8c8c8c"></div>
<div class="a t" style="left:685.40px;top:633.00px;font-size:22px;line-height:22px;color:#1a1a1a;letter-spacing:0.040px;transform:scaleY(1.090);transform-origin:0 18.70px;">HTTP/HTTPS Proxy</div>
<div class="a" style="left:664px;top:675.8px;width:16px;height:0;border-top:2px dotted #8c8c8c"></div>
<svg class="a" style="left:654px;top:668px" width="18" height="18" viewBox="0 0 18 18"><rect x="1" y="1" width="16" height="16" fill="url(#pg)" stroke="#9c9c9c" stroke-width="2"/><path d="M4 9 H14 M9 4 V14" stroke="#22327a" stroke-width="2"/></svg>
<div class="a t" style="left:685.40px;top:665.00px;font-size:22px;line-height:22px;color:#1a1a1a;letter-spacing:-0.540px;transform:scaleY(1.090);transform-origin:0 18.70px;">ICAP Server</div>
<div class="a" style="left:664px;top:707.8px;width:16px;height:0;border-top:2px dotted #8c8c8c"></div>
<div class="a t" style="left:685.40px;top:697.00px;font-size:22px;line-height:22px;color:#1a1a1a;letter-spacing:-0.500px;transform:scaleY(1.090);transform-origin:0 18.70px;">Platform Portal</div>
<div class="a" style="left:664px;top:739.8px;width:16px;height:0;border-top:2px dotted #8c8c8c"></div>
<div class="a t" style="left:685.40px;top:729.00px;font-size:22px;line-height:22px;color:#1a1a1a;letter-spacing:-0.250px;transform:scaleY(1.090);transform-origin:0 18.70px;">Mail Transfer Agent</div>
<div class="a" style="left:664px;top:771.8px;width:16px;height:0;border-top:2px dotted #8c8c8c"></div>
<svg class="a" style="left:654px;top:764px" width="18" height="18" viewBox="0 0 18 18"><rect x="1" y="1" width="16" height="16" fill="url(#pg)" stroke="#9c9c9c" stroke-width="2"/><path d="M4 9 H14 M9 4 V14" stroke="#22327a" stroke-width="2"/></svg>
<div class="a t" style="left:685.40px;top:761.00px;font-size:22px;line-height:22px;color:#1a1a1a;letter-spacing:-0.250px;transform:scaleY(1.090);transform-origin:0 18.70px;">IPSec VPN</div>
<div class="a" style="left:664px;top:803.8px;width:16px;height:0;border-top:2px dotted #8c8c8c"></div>
<svg class="a" style="left:654px;top:796px" width="18" height="18" viewBox="0 0 18 18"><rect x="1" y="1" width="16" height="16" fill="url(#pg)" stroke="#9c9c9c" stroke-width="2"/><path d="M4 9 H14 M9 4 V14" stroke="#22327a" stroke-width="2"/></svg>
<div class="a t" style="left:687.40px;top:793.00px;font-size:22px;line-height:22px;color:#1a1a1a;letter-spacing:-0.600px;transform:scaleY(1.090);transform-origin:0 18.70px;">VPN Clients</div>
<div class="a" style="left:664px;top:835.8px;width:16px;height:0;border-top:2px dotted #8c8c8c"></div>
<svg class="a" style="left:654px;top:828px" width="18" height="18" viewBox="0 0 18 18"><rect x="1" y="1" width="16" height="16" fill="url(#pg)" stroke="#9c9c9c" stroke-width="2"/><path d="M4 9 H14 M9 4 V14" stroke="#22327a" stroke-width="2"/></svg>
<div class="a t" style="left:685.40px;top:825.00px;font-size:22px;line-height:22px;color:#1a1a1a;transform:scaleY(1.090);transform-origin:0 18.70px;">Logs</div>
<div class="a" style="left:664px;top:867.8px;width:16px;height:0;border-top:2px dotted #8c8c8c"></div>
<div class="a t" style="left:685.40px;top:857.00px;font-size:22px;line-height:22px;color:#1a1a1a;letter-spacing:-0.273px;transform:scaleY(1.090);transform-origin:0 18.70px;">Fetch Policy</div>
<div class="a" style="left:664px;top:899.8px;width:16px;height:0;border-top:2px dotted #8c8c8c"></div>
<div class="a t" style="left:686.40px;top:889.00px;font-size:22px;line-height:22px;color:#1a1a1a;letter-spacing:-0.750px;transform:scaleY(1.090);transform-origin:0 18.70px;">Optimizations</div>
<div class="a" style="left:664px;top:931.8px;width:16px;height:0;border-top:2px dotted #8c8c8c"></div>
<div class="a t" style="left:685.40px;top:921.00px;font-size:22px;line-height:22px;color:#1a1a1a;letter-spacing:-0.312px;transform:scaleY(1.090);transform-origin:0 18.70px;">Hit Count</div>
<div class="a" style="left:664px;top:963.8px;width:16px;height:0;border-top:2px dotted #8c8c8c"></div>
<svg class="a" style="left:654px;top:956px" width="18" height="18" viewBox="0 0 18 18"><rect x="1" y="1" width="16" height="16" fill="url(#pg)" stroke="#9c9c9c" stroke-width="2"/><path d="M4 9 H14 M9 4 V14" stroke="#22327a" stroke-width="2"/></svg>
<div class="a t" style="left:686.40px;top:953.00px;font-size:22px;line-height:22px;color:#1a1a1a;letter-spacing:-1.000px;transform:scaleY(1.090);transform-origin:0 18.70px;">Other</div>
<div class="a t" style="left:964.50px;top:458.60px;font-size:22px;line-height:22px;color:#252525;letter-spacing:-0.317px;transform:scaleY(1.090);transform-origin:0 18.70px;">Select the cluster mode and configuration:</div>
<svg class="a" style="left:996px;top:512px" width="26" height="26" viewBox="0 0 26 26"><circle cx="13" cy="13" r="11.6" fill="#fff" stroke="#5a5a5a" stroke-width="2.4"/><circle cx="13" cy="13" r="6.5" fill="#333"/></svg>
<div class="a t" style="left:1033.40px;top:514.90px;font-size:22px;line-height:22px;color:#1a1a1a;letter-spacing:-0.338px;transform:scaleY(1.090);transform-origin:0 18.70px;">High Availability</div>
<svg class="a" style="left:1202px;top:512px" width="24" height="24" viewBox="0 0 24 24"><defs><radialGradient id="qg1202512" cx="0.4" cy="0.3" r="0.8"><stop offset="0" stop-color="#e3f0fc"/><stop offset="1" stop-color="#8fbbe6"/></radialGradient></defs><circle cx="12" cy="12" r="10.8" fill="url(#qg1202512)" stroke="#5f87ad" stroke-width="2"/><path d="M8.6 9.2 Q8.6 5.8 12 5.8 Q15.4 5.8 15.4 8.8 Q15.4 10.8 12.6 11.8 V14" fill="none" stroke="#223a5e" stroke-width="2.2"/><rect x="11.2" y="15.6" width="2.6" height="2.6" fill="#223a5e"/></svg>
<div class="a" style="left:1264px;top:506px;width:242px;height:44px;background:#fff;border:2px solid #707070;box-sizing:border-box"></div>
<div class="a t" style="left:1276.20px;top:516.80px;font-size:22px;line-height:22px;color:#111;letter-spacing:-0.750px;transform:scaleY(1.090);transform-origin:0 18.70px;">ClusterXL</div>
<svg class="a" style="left:1480px;top:523.0px" width="16" height="10" viewBox="0 0 16 10"><path d="M1 1 L8 8 L15 1" fill="none" stroke="#5a5a5a" stroke-width="2"/></svg>
<svg class="a" style="left:996px;top:568px" width="26" height="26" viewBox="0 0 26 26"><circle cx="13" cy="13" r="11.6" fill="#fff" stroke="#5a5a5a" stroke-width="2.4"/></svg>
<div class="a t" style="left:1033.40px;top:571.10px;font-size:22px;line-height:22px;color:#1a1a1a;letter-spacing:-0.255px;transform:scaleY(1.090);transform-origin:0 18.70px;">Load Sharing</div>
<svg class="a" style="left:1180px;top:568px" width="24" height="24" viewBox="0 0 24 24"><defs><radialGradient id="qg1180568" cx="0.4" cy="0.3" r="0.8"><stop offset="0" stop-color="#e3f0fc"/><stop offset="1" stop-color="#8fbbe6"/></radialGradient></defs><circle cx="12" cy="12" r="10.8" fill="url(#qg1180568)" stroke="#5f87ad" stroke-width="2"/><path d="M8.6 9.2 Q8.6 5.8 12 5.8 Q15.4 5.8 15.4 8.8 Q15.4 10.8 12.6 11.8 V14" fill="none" stroke="#223a5e" stroke-width="2.2"/><rect x="11.2" y="15.6" width="2.6" height="2.6" fill="#223a5e"/></svg>
<div class="a" style="left:1264px;top:562px;width:242px;height:44px;background:#f0f0f0;border:2px solid #cfcfcf;box-sizing:border-box"></div>
<svg class="a" style="left:996px;top:624px" width="26" height="26" viewBox="0 0 26 26"><circle cx="13" cy="13" r="11.6" fill="#fff" stroke="#5a5a5a" stroke-width="2.4"/></svg>
<div class="a t" style="left:1034.40px;top:626.70px;font-size:22px;line-height:22px;color:#1a1a1a;letter-spacing:-0.033px;transform:scaleY(1.090);transform-origin:0 18.70px;">Active-Active</div>
<svg class="a" style="left:1180px;top:624px" width="24" height="24" viewBox="0 0 24 24"><defs><radialGradient id="qg1180624" cx="0.4" cy="0.3" r="0.8"><stop offset="0" stop-color="#e3f0fc"/><stop offset="1" stop-color="#8fbbe6"/></radialGradient></defs><circle cx="12" cy="12" r="10.8" fill="url(#qg1180624)" stroke="#5f87ad" stroke-width="2"/><path d="M8.6 9.2 Q8.6 5.8 12 5.8 Q15.4 5.8 15.4 8.8 Q15.4 10.8 12.6 11.8 V14" fill="none" stroke="#223a5e" stroke-width="2.2"/><rect x="11.2" y="15.6" width="2.6" height="2.6" fill="#223a5e"/></svg>
<div class="a t" style="left:967.90px;top:697.20px;font-size:22px;line-height:22px;color:#1a1a1a;letter-spacing:0.086px;transform:scaleY(1.090);transform-origin:0 18.70px;">Tracking</div>
<div class="a" style="left:1078px;top:706px;width:666px;height:2px;background:#7a7a7a"></div>
<div class="a t" style="left:1002.00px;top:749.00px;font-size:22px;line-height:22px;color:#1a1a1a;letter-spacing:-0.413px;transform:scaleY(1.090);transform-origin:0 18.70px;">Track changes in the status of Cluster Members:</div>
<div class="a" style="left:1476px;top:740px;width:268px;height:44px;background:#fff;border:2px solid #707070;box-sizing:border-box"></div>
<div class="a t" style="left:1487.20px;top:751.80px;font-size:22px;line-height:22px;color:#111;letter-spacing:0.500px;transform:scaleY(1.090);transform-origin:0 18.70px;">Log</div>
<svg class="a" style="left:1718px;top:757.0px" width="16" height="10" viewBox="0 0 16 10"><path d="M1 1 L8 8 L15 1" fill="none" stroke="#5a5a5a" stroke-width="2"/></svg>
<div class="a t" style="left:966.50px;top:837.00px;font-size:22px;line-height:22px;color:#1a1a1a;letter-spacing:-0.219px;transform:scaleY(1.090);transform-origin:0 18.70px;">Advanced Settings</div>
<div class="a" style="left:1174px;top:846px;width:570px;height:2px;background:#7a7a7a"></div>
<svg class="a" style="left:994px;top:896px" width="26" height="26" viewBox="0 0 26 26"><rect x="1" y="1" width="24" height="24" fill="#fff" stroke="#333" stroke-width="2"/><path d="M5 15 L10 19.5 L20.5 8" fill="none" stroke="#555" stroke-width="2.2"/></svg>
<div class="a t" style="left:1031.70px;top:899.50px;font-size:22px;line-height:22px;color:#1a1a1a;letter-spacing:-0.308px;transform:scaleY(1.090);transform-origin:0 18.70px;">Use State Synchronization</div>
<svg class="a" style="left:1028px;top:948px" width="26" height="26" viewBox="0 0 26 26"><rect x="1" y="1" width="24" height="24" fill="#fff" stroke="#333" stroke-width="2"/><path d="M5 15 L10 19.5 L20.5 8" fill="none" stroke="#555" stroke-width="2.2"/></svg>
<div class="a t" style="left:1066.50px;top:951.30px;font-size:22px;line-height:22px;color:#1a1a1a;letter-spacing:-0.472px;transform:scaleY(1.090);transform-origin:0 18.70px;">Start synchronizing</div>
<div class="a" style="left:1260px;top:944px;width:140px;height:40px;background:#fff;border:2px solid #a9adb3;box-sizing:border-box"></div>
<div class="a t" style="left:1264.60px;top:951.30px;font-size:22px;line-height:22px;color:#111;transform:scaleY(1.090);transform-origin:0 18.70px;">3</div>
<svg class="a" style="left:1367px;top:948px" width="28" height="32" viewBox="0 0 28 32"><defs><linearGradient id="sg" x1="0" y1="0" x2="0" y2="1"><stop offset="0" stop-color="#f8f8f8"/><stop offset="1" stop-color="#e2e2e2"/></linearGradient></defs><rect x="0" y="0" width="28" height="15" fill="url(#sg)" stroke="#c9c9c9" stroke-width="1.5"/><rect x="0" y="17" width="28" height="15" fill="url(#sg)" stroke="#c9c9c9" stroke-width="1.5"/><path d="M9 11 L14 5 L19 11 Z M9 21 L14 27 L19 21 Z" fill="#111"/></svg>
<div class="a t" style="left:1418.80px;top:951.10px;font-size:22px;line-height:22px;color:#1a1a1a;letter-spacing:-0.259px;transform:scaleY(1.090);transform-origin:0 18.70px;">seconds after connection initiation</div>
<svg class="a" style="left:994px;top:1000px" width="26" height="26" viewBox="0 0 26 26"><rect x="1" y="1" width="24" height="24" fill="#fff" stroke="#333" stroke-width="2"/></svg>
<div class="a t" style="left:1031.70px;top:1003.10px;font-size:22px;line-height:22px;color:#1a1a1a;letter-spacing:-0.479px;transform:scaleY(1.090);transform-origin:0 18.70px;">Use Virtual MAC</div>
<div class="a t" style="left:995.90px;top:1057.00px;font-size:22px;line-height:22px;color:#1a1a1a;letter-spacing:-0.461px;transform:scaleY(1.090);transform-origin:0 18.70px;">Upon cluster member recovery:</div>
<svg class="a" style="left:1028px;top:1104px" width="26" height="26" viewBox="0 0 26 26"><circle cx="13" cy="13" r="11.6" fill="#fff" stroke="#5a5a5a" stroke-width="2.4"/><circle cx="13" cy="13" r="6.5" fill="#333"/></svg>
<div class="a t" style="left:1065.40px;top:1107.30px;font-size:22px;line-height:22px;color:#1a1a1a;letter-spacing:-0.416px;transform:scaleY(1.090);transform-origin:0 18.70px;">Maintain current active Cluster Member</div>
<svg class="a" style="left:1028px;top:1156px" width="26" height="26" viewBox="0 0 26 26"><circle cx="13" cy="13" r="11.6" fill="#fff" stroke="#5a5a5a" stroke-width="2.4"/></svg>
<div class="a t" style="left:1066.40px;top:1159.00px;font-size:22px;line-height:22px;color:#1a1a1a;letter-spacing:-0.554px;transform:scaleY(1.090);transform-origin:0 18.70px;">Switch to higher priority Cluster Member</div>
<svg class="a" style="left:994px;top:1212px" width="26" height="26" viewBox="0 0 26 26"><rect x="1" y="1" width="24" height="24" fill="#fff" stroke="#333" stroke-width="2"/></svg>
<div class="a t" style="left:1031.70px;top:1214.90px;font-size:22px;line-height:22px;color:#1a1a1a;letter-spacing:-0.336px;transform:scaleY(1.090);transform-origin:0 18.70px;">Use Geo Mode in a Cloud</div>
<svg class="a" style="left:1298px;top:1214px" width="24" height="24" viewBox="0 0 24 24"><defs><radialGradient id="qg12981214" cx="0.4" cy="0.3" r="0.8"><stop offset="0" stop-color="#e3f0fc"/><stop offset="1" stop-color="#8fbbe6"/></radialGradient></defs><circle cx="12" cy="12" r="10.8" fill="url(#qg12981214)" stroke="#5f87ad" stroke-width="2"/><path d="M8.6 9.2 Q8.6 5.8 12 5.8 Q15.4 5.8 15.4 8.8 Q15.4 10.8 12.6 11.8 V14" fill="none" stroke="#223a5e" stroke-width="2.2"/><rect x="11.2" y="15.6" width="2.6" height="2.6" fill="#223a5e"/></svg>
<div class="a" style="left:1218px;top:570px;width:1076px;height:70px;background:#fff;border:2px solid #767676;box-sizing:border-box"></div>
<div class="a t" style="left:1231.00px;top:577.45px;font-size:23px;line-height:23px;color:#3a3340;letter-spacing:0.244px;transform:scaleY(1.090);transform-origin:0 19.55px;">A High Availability Security Cluster ensures redundancy of Security Gateway and VPN</div>
<div class="a t" style="left:1230.00px;top:607.45px;font-size:23px;line-height:23px;color:#3a3340;letter-spacing:0.370px;transform:scaleY(1.090);transform-origin:0 19.55px;">connections by providing transparent failover to a backup Security Gateway in the event of a failure.</div>
</body></html>
